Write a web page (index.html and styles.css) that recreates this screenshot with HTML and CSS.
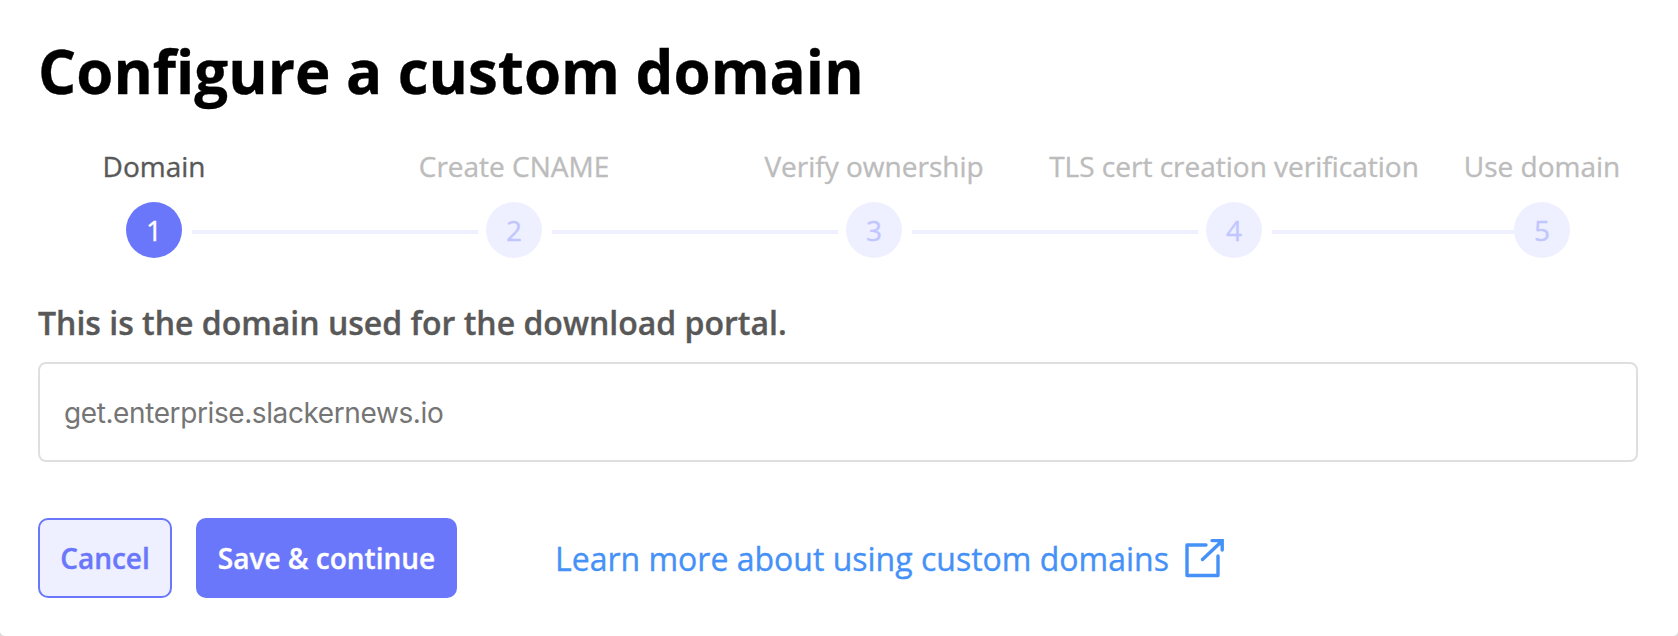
FILE: index.html
```html
<!DOCTYPE html>
<html lang="en">
<head>
<meta charset="utf-8">
<title>Configure a custom domain</title>
<link rel="stylesheet" href="styles.css">
</head>
<body>
<main class="modal">
  <h1 class="title">Configure a custom domain</h1>
  <ol class="steps">
    <li class="step active"><span class="name">Domain</span><span class="dot">1</span><span class="line"></span></li>
    <li class="step"><span class="name">Create CNAME</span><span class="dot">2</span><span class="line"></span></li>
    <li class="step"><span class="name">Verify ownership</span><span class="dot">3</span><span class="line"></span></li>
    <li class="step short"><span class="name">TLS cert creation verification</span><span class="dot">4</span><span class="line"></span></li>
    <li class="step last"><span class="name">Use domain</span><span class="dot">5</span></li>
  </ol>
  <label class="label" for="domain">This is the domain used for the download portal.</label>
  <input class="input" id="domain" type="text" placeholder="get.enterprise.slackernews.io">
  <div class="actions">
    <button class="btn secondary" type="button">Cancel</button>
    <button class="btn primary" type="button">Save &amp; continue</button>
    <a class="link" href="#"><span class="link-text">Learn more about using custom domains</span>
      <svg class="icon" width="42" height="42" viewBox="0 0 42 42" fill="none" stroke="currentColor" stroke-width="3.4" stroke-linecap="round" stroke-linejoin="round"><path d="M22 8H3V38.5H34V19"/><path d="M18.5 22.5L37 5"/><path d="M28 3.6H38.2V13" stroke-linejoin="miter"/><path d="M31.5 3.5H38.3V10z" fill="currentColor" stroke="none"/></svg>
    </a>
  </div>
</main>
</body>
</html>
```
FILE: styles.css
```css
* { box-sizing: border-box; }
body { margin: 0; background: #dcdcdc; font-family: "Open Sans", sans-serif; -webkit-text-stroke: 0.35px currentColor; }
.modal { height: 636px; padding: 30px 40px 0 38px; background: #fff; border-radius: 0 0 5px 5px; overflow: hidden; }
.title { margin: 0; font-size: 60px; line-height: 82px; font-weight: 700; color: #000; }
.steps { display: flex; margin: 33px 0 0 88px; padding: 0; list-style: none; }
.step { display: grid; grid-template: 42px 15px 56px / 56px 1fr; width: 360px; color: #bcbcbc; font-size: 28px; }
.step.short { width: 308px; }
.step.last { width: 56px; }
.name { grid-area: 1 / 1; justify-self: center; line-height: 42px; white-space: nowrap; }
.dot { grid-area: 3 / 1; border-radius: 50%; background: #eef0ff; color: #c1c6ff; line-height: 56px; text-align: center; }
.line { grid-area: 3 / 2; height: 4px; margin: 28px 8px 0 10px; background: #eef0ff; }
.short .line { margin-right: 0; }
.active .name { color: #585858; }
.active .dot { background: #6a77fb; color: #fff; }
.label { display: block; margin-top: 43px; font-size: 32px; line-height: 44px; font-weight: 600; color: #585858; }
.input { display: block; width: 100%; height: 100px; margin-top: 17px; padding: 2px 24px 0; border: 2px solid #dfdfdf; border-radius: 8px; background: #fff; font: 28px/34px Inter, sans-serif; letter-spacing: -0.4px; -webkit-text-stroke: 0; }
.input::placeholder { color: #757575; opacity: 1; }
.actions { display: flex; align-items: center; margin-top: 56px; }
.btn { height: 80px; padding: 0; border: 2px solid #6a77fb; border-radius: 10px; font: 600 28px/38px "Open Sans", sans-serif; }
.secondary { width: 134px; background: #eef0ff; color: #6a77fb; }
.primary { width: 261px; margin-left: 24px; background: #6a77fb; color: #fff; }
.link { display: flex; align-items: center; margin-left: 98px; color: #4591f7; font-size: 32px; line-height: 44px; text-decoration: none; }
.link-text { padding-top: 2px; }
.icon { margin-left: 15px; }
```
